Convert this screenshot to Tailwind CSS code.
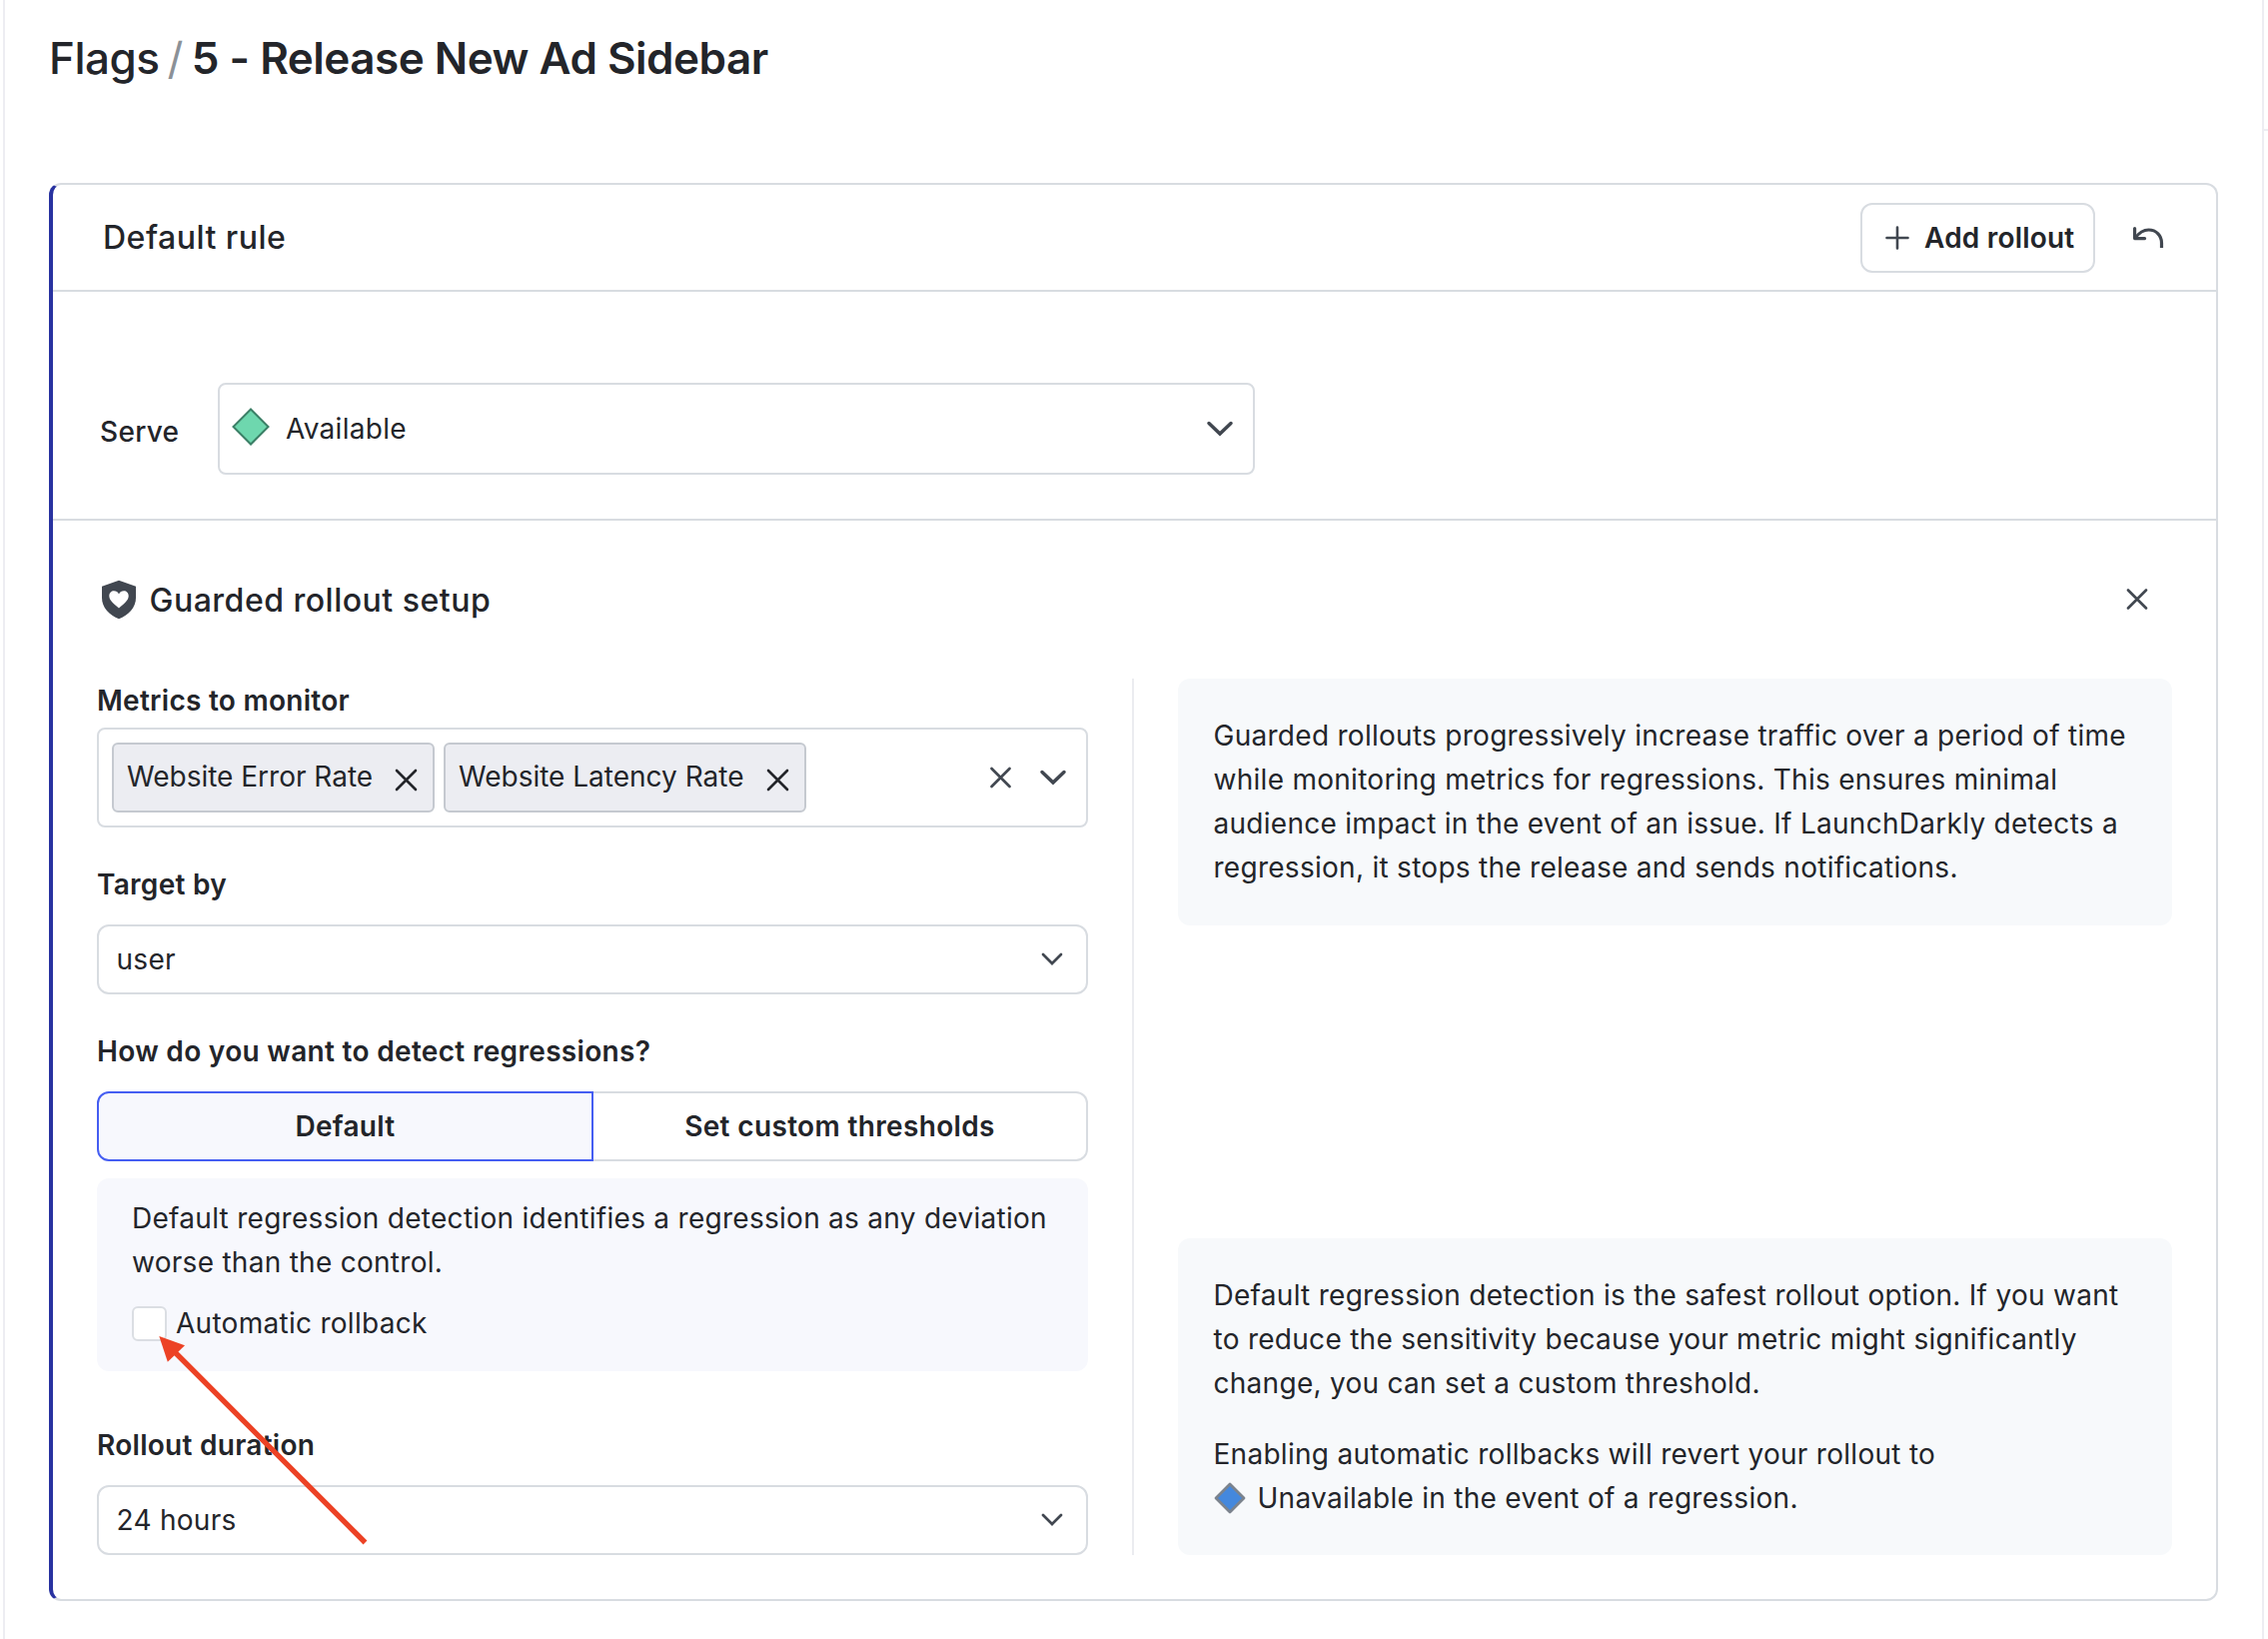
<!DOCTYPE html>
<html lang="en">
<head>
<meta charset="utf-8">
<title>5 - Release New Ad Sidebar</title>
<script src="https://cdn.jsdelivr.net/npm/@tailwindcss/browser@4"></script>
</head>
<body class="relative flex h-[1640px] w-[2270px] overflow-hidden bg-white font-['Inter',sans-serif] text-[28px] leading-[44px] tracking-[0.28px] text-[#23252a]">
  <div class="ml-[3px] w-[2263px] shrink-0 border-x-2 border-[#ededf2]">
    <h1 class="ml-[44px] mt-[36px] flex h-[44px] items-center text-[44px] font-medium tracking-[-0.5px]">
      <span>Flags</span><span class="ml-[8px] font-normal text-[#8b9197]">/</span><span class="ml-[9px] font-semibold">5 - Release New Ad Sidebar</span>
    </h1>

    <section class="ml-[44px] mt-[103px] w-[2171px] rounded-xl border-2 border-l-4 border-[#d8dce1] border-l-[#2832a0]">
      <header class="flex h-[107px] items-center border-b-2 border-[#d8dce1] pl-[50px]">
        <h2 class="flex-1 text-[32px] leading-[40px] font-medium tracking-[0.5px]">Default rule</h2>
        <button class="flex h-[70px] w-[235px] items-center rounded-xl border-2 border-[#d8dce1] pl-[23px] font-semibold tracking-[0.2px]">
          <svg class="size-[24px]" viewBox="0 0 24 24" fill="none" stroke="#414750" stroke-width="2.6" stroke-linecap="round"><path d="M12 1.500v21M1.500 12h21"/></svg>
          <span class="ml-[15px]">Add rollout</span>
        </button>
        <button class="ml-[37px] mr-[51px]">
          <svg class="h-[24px] w-[33px]" viewBox="0 0 33 24" fill="none" stroke="#414750" stroke-width="3.2" stroke-linejoin="round"><path d="M3.200 12C7 6.800 11.500 4 16.500 4c7.800 0 13 5.800 13 13v5"/><path d="M2.600 2.600v10h10" stroke-linecap="round"/></svg>
        </button>
      </header>

      <div class="flex h-[229px] border-b-2 border-[#d8dce1] pl-[47px] pt-[91px]">
        <span class="mt-[27px] w-[118px] font-medium tracking-[0.3px]">Serve</span>
        <div class="flex h-[92px] w-[1038px] items-center rounded-lg border-2 border-[#d8dce1] pr-[19px]">
          <svg class="-mt-[4px] ml-[12px] h-[40px] w-[38px]" viewBox="0 0 38 40"><path d="M19 2.500 36.500 20 19 37.500 1.500 20Z" fill="#6ed7ae" stroke="#3b7f66" stroke-width="2"/></svg>
          <span class="ml-[16px] flex-1">Available</span>
          <svg class="h-[16px] w-[28px]" viewBox="0 0 28 16" fill="none" stroke="#414750" stroke-width="3.500" stroke-linecap="round"><path d="m3 2.500 11 10.500L25 2.500"/></svg>
        </div>
      </div>

      <div class="px-[44px] pb-[44px] pt-[58px]">
        <div class="flex h-[42px] items-center">
          <svg class="ml-[4px] h-[40px] w-[36px]" viewBox="0 0 36 40"><path d="M18 .8 35 6.800V18c0 10-7.500 17.500-17 21.200C8.500 35.500 1 28 1 18V6.800Z" fill="#414750"/><path d="M18 28.500c-5.500-4.500-9.700-7.800-9.700-12.200 0-3 2.100-5 4.700-5 2.200 0 4 1.200 5 3.200 1-2 2.800-3.200 5-3.200 2.600 0 4.700 2 4.700 5 0 4.400-4.200 7.700-9.700 12.200Z" fill="#fff"/></svg>
          <h3 class="ml-[12.500px] mt-[1px] flex-1 text-[32px] leading-[40px] font-medium tracking-[0.5px]">Guarded rollout setup</h3>
          <svg class="mr-[24px] size-[22px]" viewBox="0 0 22 22" fill="none" stroke="#414750" stroke-width="2.600" stroke-linecap="round"><path d="m2 1.500 18 18M20 1.500 2 19.500"/></svg>
        </div>

        <div class="mt-[58px] flex h-[877px]">
          <div class="flex w-[992px] flex-col">
            <label class="font-semibold">Metrics to monitor</label>
            <div class="mt-[5px] flex h-[100px] items-center gap-[9px] rounded-lg border-2 border-[#d8dce1] pl-[13px] pr-[19px] tracking-normal">
              <div class="flex h-[70px] w-[323px] items-center justify-between rounded-md border-2 border-[#c5c9d0] bg-[#ecedf2] pl-[13px] pr-[15px]">
                <span class="-mt-[2px]">Website Error Rate</span>
                <svg class="mt-[5px] size-[23px]" viewBox="0 0 23 23" fill="none" stroke="#23252a" stroke-width="2.600" stroke-linecap="round"><path d="m2 2 19 19M21 2 2 21"/></svg>
              </div>
              <div class="flex h-[70px] w-[363px] items-center justify-between rounded-md border-2 border-[#c5c9d0] bg-[#ecedf2] pl-[13px] pr-[15px]">
                <span class="-mt-[2px]">Website Latency Rate</span>
                <svg class="mt-[5px] size-[23px]" viewBox="0 0 23 23" fill="none" stroke="#23252a" stroke-width="2.600" stroke-linecap="round"><path d="m2 2 19 19M21 2 2 21"/></svg>
              </div>
              <svg class="ml-auto mr-[19px] size-[22px]" viewBox="0 0 22 22" fill="none" stroke="#414750" stroke-width="2.600" stroke-linecap="round"><path d="m2.500 2 18 18M20.500 2 2.500 20"/></svg>
              <svg class="h-[16px] w-[28px]" viewBox="0 0 28 16" fill="none" stroke="#414750" stroke-width="3.500" stroke-linecap="round"><path d="m3 2.500 11 10.500L25 2.500"/></svg>
            </div>

            <label class="mt-[35px] font-semibold">Target by</label>
            <div class="mt-[18px] flex h-[70px] items-center justify-between rounded-xl border-2 border-[#d8dce1] pl-[17.500px] pr-[23.500px]">
              <span>user</span>
              <svg class="-mt-[1px] h-[13px] w-[22px]" viewBox="0 0 22 13" fill="none" stroke="#414750" stroke-width="2.700" stroke-linecap="round"><path d="m2 2 9 9 9-9"/></svg>
            </div>

            <label class="mt-[35px] font-semibold tracking-[0.32px]">How do you want to detect regressions?</label>
            <div class="mt-[18px] flex h-[70px] text-center font-semibold leading-[66px]">
              <button class="w-[497px] rounded-l-xl border-2 border-[#455ef2] bg-[#f7f8fd]">Default</button>
              <button class="w-[495px] rounded-r-xl border-2 border-l-0 border-[#d8dce1] tracking-[0.35px]">Set custom thresholds</button>
            </div>

            <div class="mt-[17px] h-[193px] rounded-xl bg-[#f7f8fd] pl-[35px] pt-[18px]">
              <p class="whitespace-nowrap">Default regression detection identifies a regression as any deviation<br>worse than the control.</p>
              <div class="mt-[17px] flex items-center">
                <span class="size-[35px] rounded-md border-2 border-[#dbdee3] bg-white"></span>
                <span class="ml-[9px]">Automatic rollback</span>
              </div>
            </div>

            <label class="mt-[52px] font-semibold">Rollout duration</label>
            <div class="mt-[18px] flex h-[70px] items-center justify-between rounded-xl border-2 border-[#d8dce1] pl-[17.500px] pr-[23.500px]">
              <span>24 hours</span>
              <svg class="-mt-[1px] h-[13px] w-[22px]" viewBox="0 0 22 13" fill="none" stroke="#414750" stroke-width="2.700" stroke-linecap="round"><path d="m2 2 9 9 9-9"/></svg>
            </div>
          </div>

          <div class="ml-[44px] w-[2px] bg-[#ebecf0]"></div>

          <div class="ml-[44px] flex w-[995px] flex-col justify-between whitespace-nowrap">
            <div class="h-[247px] rounded-xl bg-[#f7f9fb] px-[35.500px] pt-[35px]">
              <p>Guarded rollouts progressively increase traffic over a period of time<br>while monitoring metrics for regressions. This ensures minimal<br>audience impact in the event of an issue. If LaunchDarkly detects a<br>regression, it stops the release and sends notifications.</p>
            </div>
            <div class="h-[317px] rounded-xl bg-[#f7f9fb] px-[35.500px] pt-[35px]">
              <p>Default regression detection is the safest rollout option. If you want<br>to reduce the sensitivity because your metric might significantly<br>change, you can set a custom threshold.</p>
              <p class="mt-[27px]">Enabling automatic rollbacks will revert your rollout to<br><span class="flex items-center"><svg class="-mt-[1px] size-[32px]" viewBox="0 0 32 32"><path d="M16 2 30 16 16 30 2 16Z" fill="#4488dd" stroke="#7b838d" stroke-width="2.800" stroke-linejoin="round"/></svg><span class="ml-[12px]">Unavailable in the event of a regression.</span></span></p>
            </div>
          </div>
        </div>
      </div>
    </section>
  </div>
  <div class="mt-[129px] h-[2px] w-[4px] bg-[#ededf2]"></div>

  <!-- Callout arrow pointing at the automatic rollback checkbox -->
  <svg class="absolute left-[150px] top-[1330px] h-[220px] w-[225px]" viewBox="150 1330 225 220"><path d="M174 1352 365.500 1543.500" stroke="#ec4225" stroke-width="5.400"/><path d="m159.300 1337 25.700 9.300-17.200 16.500Z" fill="#ec4225"/></svg>
</body>
</html>
